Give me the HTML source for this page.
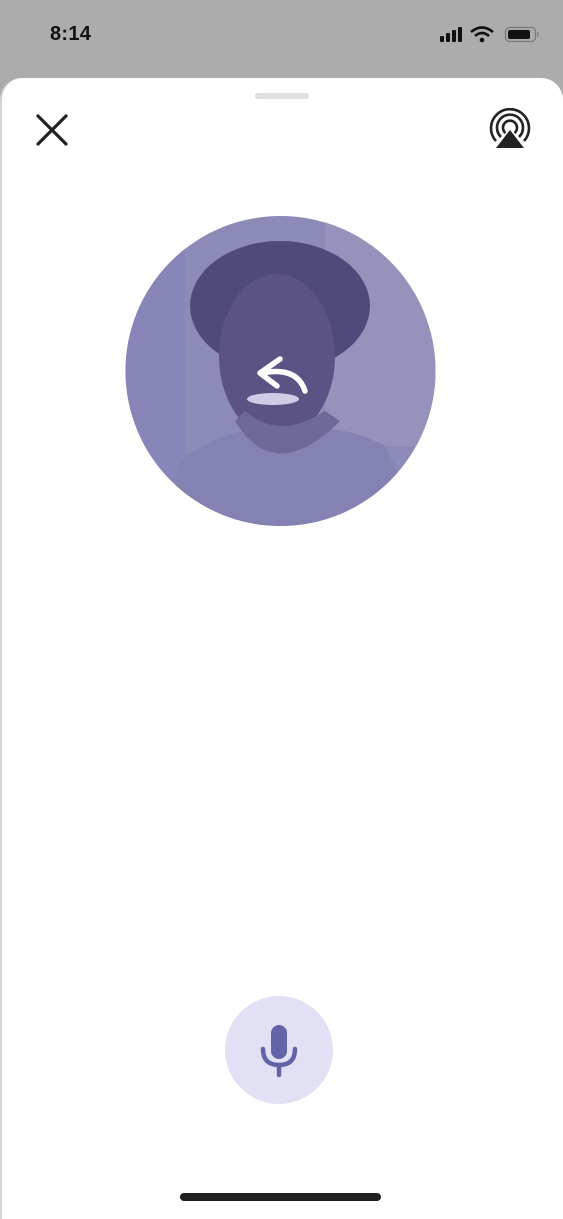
<!DOCTYPE html>
<html><head><meta charset="utf-8"><style>
html,body{margin:0;padding:0;width:563px;height:1219px;overflow:hidden;background:#acacac;font-family:"Liberation Sans",sans-serif;}
.time{position:absolute;left:50px;top:23px;font-size:20px;font-weight:bold;color:#111;letter-spacing:0.3px}
.sheet{position:absolute;left:0;top:78px;width:563px;height:1141px;background:#fff;border-radius:22px 22px 0 0;border-left:2px solid #d4d4d4;box-sizing:border-box}
.grab{position:absolute;left:255px;top:93px;width:54px;height:6px;border-radius:3px;background:#e0e0e0}
.home{position:absolute;left:180px;top:1193px;width:201px;height:8px;border-radius:4px;background:#202020}
.mic{position:absolute;left:225px;top:996px;width:108px;height:108px;border-radius:50%;background:#e1e0f5}
</style></head><body>
<div class="time">8:14</div>
<svg style="position:absolute;left:438px;top:26px" width="105" height="18" viewBox="0 0 105 18">
<rect x="2" y="10" width="4" height="6" rx="1" fill="#111"/><rect x="8" y="7" width="4" height="9" rx="1" fill="#111"/><rect x="14" y="4" width="4" height="12" rx="1" fill="#111"/><rect x="20" y="1" width="4" height="15" rx="1" fill="#111"/>
<path d="M33 6 Q44 -3 55 6" stroke="#111" stroke-width="2.6" fill="none"/><path d="M37 10 Q44 4 51 10" stroke="#111" stroke-width="2.6" fill="none"/><circle cx="44" cy="14" r="2.3" fill="#111"/>
<rect x="67.5" y="1.5" width="30" height="14" rx="4" fill="none" stroke="#777" stroke-width="1.2"/><rect x="70" y="4" width="22" height="9" rx="2" fill="#111"/><rect x="99" y="6" width="1.6" height="5" fill="#888"/>
</svg>
<div class="sheet"></div>
<div class="grab"></div>
<svg style="position:absolute;left:34px;top:112px" width="36" height="36"><path d="M4 4L32 32M32 4L4 32" stroke="#222" stroke-width="3.2" stroke-linecap="round"/></svg>
<svg style="position:absolute;left:486px;top:108px" width="48" height="44" viewBox="0 0 48 44">
<g fill="none" stroke="#222" stroke-width="2.6"><path d="M10 33A19 19 0 1 1 38 33"/><path d="M15 29A13 13 0 1 1 33 29"/><path d="M19.5 25A7 7 0 1 1 28.5 25"/></g>
<path d="M24 22L38 40H10Z" fill="#222"/></svg>
<svg style="position:absolute;left:125px;top:216px" width="311" height="311" viewBox="0 0 311 311">
<defs><clipPath id="c"><circle cx="155.5" cy="155" r="155"/></clipPath></defs>
<g clip-path="url(#c)">
<rect width="311" height="311" fill="#8c8ab6"/>
<rect x="0" y="0" width="60" height="311" fill="#8886b8"/>
<rect x="200" y="0" width="111" height="230" fill="#9593bb"/>
<ellipse cx="155" cy="90" rx="90" ry="65" fill="#4e4a7a"/>
<ellipse cx="152" cy="140" rx="58" ry="82" fill="#5a5383"/>
<path d="M40 311L55 245Q110 205 155 215Q215 205 260 230L300 311Z" fill="#8482b2"/>
<path d="M110 205Q150 270 215 205L200 195Q155 225 120 195Z" fill="#6e6a98"/>
<ellipse cx="148" cy="183" rx="26" ry="6" fill="#d0cce6"/>
<path d="M155 143L135 157L152 170M137 157Q172 150 180 175" fill="none" stroke="#fff" stroke-width="5.5" stroke-linecap="round" stroke-linejoin="round"/>
</g></svg>
<div class="mic"></div>
<svg style="position:absolute;left:258px;top:1022px" width="42" height="58" viewBox="0 0 42 58">
<rect x="13" y="3" width="16" height="34" rx="8" fill="#6264a7"/>
<path d="M5 27Q5 43 21 43Q37 43 37 27" fill="none" stroke="#6264a7" stroke-width="4.5" stroke-linecap="round"/>
<path d="M21 43V53" stroke="#6264a7" stroke-width="4.5" stroke-linecap="round"/></svg>
<div class="home"></div>
</body></html>
